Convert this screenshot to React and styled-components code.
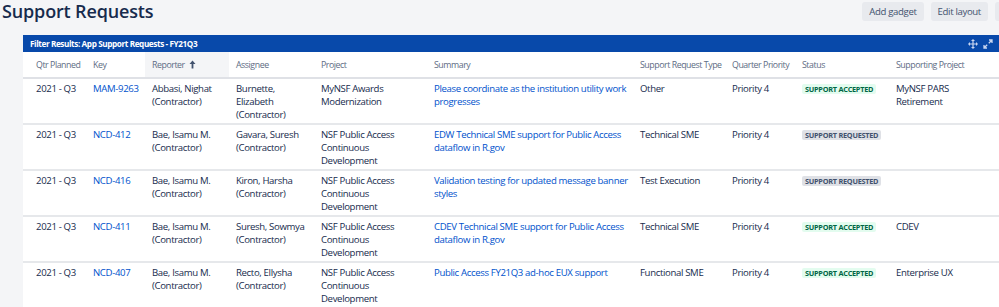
import React from "react"
import styled, { createGlobalStyle } from "styled-components"

const GlobalStyle = createGlobalStyle`
  html, body {
    margin: 0;
    padding: 0;
    background: #f4f5f7;
    overflow: hidden;
  }
  body {
    font-family: "Open Sans", "Noto Sans", sans-serif;
    color: #172b4d;
  }
`

const Page = styled.div`
  width: 1031px;
`

const TopBar = styled.div`
  display: flex;
  align-items: flex-start;
  justify-content: space-between;
  height: 35px;
  padding: 0 0 0 2px;
`

const Title = styled.h1`
  margin: 0;
  padding-top: 0;
  font-size: 18px;
  line-height: 23px;
  font-weight: 600;
  letter-spacing: -0.15px;
  color: #172b4d;
`

const Buttons = styled.div`
  display: flex;
  gap: 7px;
  padding-top: 2px;
`

const Button = styled.button`
  height: 19px;
  padding: 0 7px;
  border: 0;
  border-radius: 3px;
  background: #e8eaee;
  color: #42526e;
  font-family: inherit;
  font-size: 9.6px;
  letter-spacing: -0.35px;
  cursor: pointer;
`

const Gadget = styled.section`
  width: 990px;
  margin-left: 23px;
  background: #fff;
`

const GadgetHeader = styled.div`
  display: flex;
  align-items: center;
  justify-content: space-between;
  height: 17px;
  padding: 0 11px 0 7px;
  background: #0849aa;
  color: #fff;
`

const GadgetTitle = styled.span`
  font-size: 8.2px;
  font-weight: 700;
  letter-spacing: -0.4px;
`

const IconRow = styled.div`
  display: flex;
  align-items: center;
  gap: 5px;
  color: #c9d6f0;
`

const Table = styled.table`
  width: 100%;
  border-collapse: collapse;
  table-layout: fixed;
`

const Th = styled.th`
  height: 25px;
  padding: 0 3px 0 ${p => (p.$first ? 13 : 7)}px;
  text-align: left;
  vertical-align: middle;
  font-size: 8.8px;
  font-weight: 400;
  letter-spacing: -0.45px;
  color: #5e6c84;
  white-space: nowrap;
  background: ${p => (p.$sorted ? "#f4f5f7" : "#fff")};
  border-bottom: 2px solid #dfe1e6;
`

const Td = styled.td`
  padding: 3px 3px 2px ${p => (p.$first ? 13 : 7)}px;
  vertical-align: top;
  font-size: 9.6px;
  line-height: 13px;
  letter-spacing: -0.35px;
  color: #172b4d;
  border-bottom: 2px solid #e6e8eb;
  height: 39px;
`

const IssueLink = styled.a`
  color: #0052cc;
  text-decoration: none;
`

const Lozenge = styled.span`
  display: inline-block;
  margin-top: 1px;
  padding: 0 3px;
  border-radius: 2px;
  font-size: 7.3px;
  line-height: 10px;
  font-weight: 700;
  letter-spacing: -0.25px;
  text-transform: uppercase;
  white-space: nowrap;
  background: ${p => (p.$accepted ? "#e3fcef" : "#dfe1e6")};
  color: ${p => (p.$accepted ? "#006644" : "#42526e")};
`

const SortArrow = () => (
  <svg width="7" height="9" viewBox="0 0 7 9" style={{ marginLeft: 4, verticalAlign: "-1px" }}>
    <path d="M3.5 0.5 L6.5 4 H4.4 V8.5 H2.6 V4 H0.5 Z" fill="#42526e" />
  </svg>
)

const MoveIcon = () => (
  <svg width="10" height="10" viewBox="0 0 10 10" fill="currentColor">
    <path d="M5 0 L7 2 H5.6 V4.4 H8 V3 L10 5 L8 7 V5.6 H5.6 V8 H7 L5 10 L3 8 H4.4 V5.6 H2 V7 L0 5 L2 3 V4.4 H4.4 V2 H3 Z" />
  </svg>
)

const ExpandIcon = () => (
  <svg width="10" height="10" viewBox="0 0 10 10" fill="none" stroke="currentColor" strokeWidth="1.3">
    <path d="M6 1 H9 V4 M9 1 L5.8 4.2 M4 9 H1 V6 M1 9 L4.2 5.8" />
  </svg>
)

const MenuIcon = () => (
  <svg width="4" height="10" viewBox="0 0 4 10" fill="currentColor">
    <circle cx="2" cy="1.5" r="1" />
    <circle cx="2" cy="5" r="1" />
    <circle cx="2" cy="8.5" r="1" />
  </svg>
)

const columns = [
  { label: "Qtr Planned", width: 63 },
  { label: "Key", width: 59 },
  { label: "Reporter", width: 84, sorted: true },
  { label: "Assignee", width: 85 },
  { label: "Project", width: 113 },
  { label: "Summary", width: 206 },
  { label: "Support Request Type", width: 92 },
  { label: "Quarter Priority", width: 70 },
  { label: "Status", width: 94 },
  { label: "Supporting Project", width: 93 },
  { label: "", width: 31 },
]

const NSF = "NSF Public Access Continuous Development"
const BAE = "Bae, Isamu M. (Contractor)"

const rows = [
  {
    key: "MAM-9263",
    reporter: "Abbasi, Nighat (Contractor)",
    assignee: "Burnette, Elizabeth (Contractor)",
    project: "MyNSF Awards Modernization",
    summary: "Please coordinate as the institution utility work progresses",
    type: "Other",
    accepted: true,
    supporting: "MyNSF PARS Retirement",
  },
  {
    key: "NCD-412",
    reporter: BAE,
    assignee: "Gavara, Suresh (Contractor)",
    project: NSF,
    summary: "EDW Technical SME support for Public Access dataflow in R.gov",
    type: "Technical SME",
    accepted: false,
    supporting: "",
  },
  {
    key: "NCD-416",
    reporter: BAE,
    assignee: "Kiron, Harsha (Contractor)",
    project: NSF,
    summary: "Validation testing for updated message banner styles",
    type: "Test Execution",
    accepted: false,
    supporting: "",
  },
  {
    key: "NCD-411",
    reporter: BAE,
    assignee: "Suresh, Sowmya (Contractor)",
    project: NSF,
    summary: "CDEV Technical SME support for Public Access dataflow in R.gov",
    type: "Technical SME",
    accepted: true,
    supporting: "CDEV",
  },
  {
    key: "NCD-407",
    reporter: BAE,
    assignee: "Recto, Ellysha (Contractor)",
    project: NSF,
    summary: "Public Access FY21Q3 ad-hoc EUX support",
    type: "Functional SME",
    accepted: true,
    supporting: "Enterprise UX",
  },
]

export default function App() {
  return (
    <Page>
      <GlobalStyle />
      <TopBar>
        <Title>Support Requests</Title>
        <Buttons>
          <Button>Add gadget</Button>
          <Button>Edit layout</Button>
          <Button>Tools</Button>
        </Buttons>
      </TopBar>
      <Gadget>
        <GadgetHeader>
          <GadgetTitle>Filter Results: App Support Requests - FY21Q3</GadgetTitle>
          <IconRow>
            <MoveIcon />
            <ExpandIcon />
            <MenuIcon />
          </IconRow>
        </GadgetHeader>
        <Table>
          <colgroup>
            {columns.map((c, i) => (
              <col key={i} style={{ width: c.width }} />
            ))}
          </colgroup>
          <thead>
            <tr>
              {columns.map((c, i) => (
                <Th key={i} $first={i === 0} $sorted={c.sorted}>
                  {c.label}
                  {c.sorted && <SortArrow />}
                </Th>
              ))}
            </tr>
          </thead>
          <tbody>
            {rows.map(r => (
              <tr key={r.key}>
                <Td $first>2021 - Q3</Td>
                <Td><IssueLink href="#">{r.key}</IssueLink></Td>
                <Td>{r.reporter}</Td>
                <Td>{r.assignee}</Td>
                <Td>{r.project}</Td>
                <Td><IssueLink href="#">{r.summary}</IssueLink></Td>
                <Td>{r.type}</Td>
                <Td>Priority 4</Td>
                <Td>
                  <Lozenge $accepted={r.accepted}>
                    {r.accepted ? "Support Accepted" : "Support Requested"}
                  </Lozenge>
                </Td>
                <Td>{r.supporting}</Td>
                <Td />
              </tr>
            ))}
          </tbody>
        </Table>
      </Gadget>
    </Page>
  )
}
